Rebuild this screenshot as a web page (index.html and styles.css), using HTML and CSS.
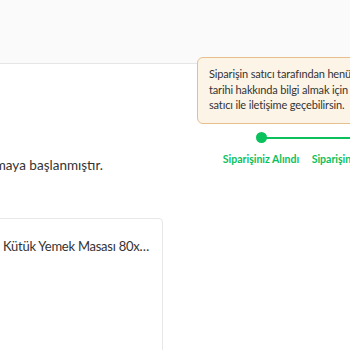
FILE: index.html
```html
<!DOCTYPE html>
<html lang="tr">
<head>
    <meta charset="UTF-8">
    <title>Sipariş Detayı</title>
    <link rel="stylesheet" href="styles.css">
</head>
<body>
    <div class="page-header"></div>
    <div class="order-status">
        <div class="status-info">
            <p class="status-message">Siparişiniz hazırlanmaya başlanmıştır.</p>
        </div>
        <div class="stepper">
            <div class="step">
                <div class="step-track">
                    <span class="step-dot"></span>
                    <span class="step-line"></span>
                </div>
                <span class="step-label">Siparişiniz Alındı</span>
                <div class="step-tooltip">
                    Siparişin satıcı tarafından henüz kargoya verilmedi. Teslim<br>
                    tarihi hakkında bilgi almak için sipariş detaylarından<br>
                    satıcı ile iletişime geçebilirsin.
                </div>
            </div>
            <div class="step">
                <div class="step-track">
                    <span class="step-line"></span>
                </div>
                <span class="step-label">Siparişin Hazırlanıyor</span>
            </div>
        </div>
    </div>
    <div class="product-card">
        <div class="product-image"></div>
        <div class="product-name">Kütük Yemek Masası 80x80 Masif Ahşap</div>
    </div>
</body>
</html>
```

FILE: styles.css
```css
body {
    margin: 0;
    height: 350px;
    overflow: hidden;
    background: #fff;
    font-family: Lato, "Open Sans", sans-serif;
    color: #333;
}
.page-header {
    height: 63px;
    background: #fafafa;
    border-bottom: 1px solid #e6e6e6;
}
.order-status {
    display: flex;
    height: 120px;
}
.status-info {
    flex: none;
    width: 103px;
    display: flex;
    justify-content: flex-end;
    padding-top: 92px;
}
.status-message {
    flex: none;
    margin: 0;
    font-size: 13.5px;
    line-height: 18px;
    white-space: nowrap;
}
.stepper {
    flex: none;
    display: flex;
    margin-left: 108px;
    padding-top: 68px;
}
.step {
    position: relative;
    display: flex;
    flex-direction: column;
    align-items: center;
    width: 100px;
}
.step-track {
    position: relative;
    width: 100%;
    height: 11px;
    display: flex;
    justify-content: center;
}
.step-dot {
    width: 11px;
    height: 11px;
    border-radius: 50%;
    background: #0bc15c;
    position: relative;
    z-index: 1;
}
.step-line {
    position: absolute;
    left: 50%;
    right: -50%;
    top: 4.5px;
    height: 2px;
    background: #0bc15c;
}
.step-label {
    margin-top: 9px;
    font-size: 10.5px;
    line-height: 14px;
    font-weight: bold;
    color: #0bc15c;
    white-space: nowrap;
}
.step-tooltip {
    position: absolute;
    left: -14px;
    top: -75px;
    box-sizing: border-box;
    height: 67px;
    padding: 8px 11px;
    background: #fdf4e8;
    border: 1px solid #e6bf8c;
    border-radius: 6px;
    font-size: 11px;
    letter-spacing: -0.15px;
    line-height: 15.5px;
    color: #333;
    white-space: nowrap;
}
.product-card {
    display: flex;
    margin: 34px 0 0 -100px;
    width: 263px;
    height: 160px;
    box-sizing: border-box;
    border: 1px solid #e8e8e8;
    border-radius: 4px;
}
.product-image {
    flex: none;
    width: 88px;
    margin: 12px 0 12px 12px;
}
.product-name {
    flex: none;
    width: 149px;
    padding: 18px 0 0 2px;
    font-size: 13px;
    letter-spacing: -0.25px;
    line-height: 18px;
    white-space: nowrap;
    overflow: hidden;
    text-overflow: ellipsis;
}
```
